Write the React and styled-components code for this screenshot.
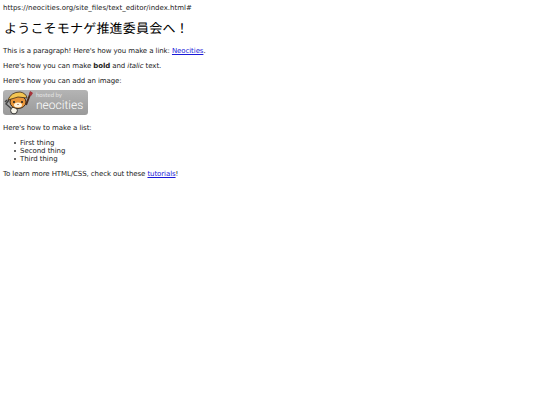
import styled, { createGlobalStyle } from 'styled-components';

const Global = createGlobalStyle`
html, body { margin: 0; background: #fff; }
body { font-family: "DejaVu Sans", sans-serif; font-size: 7px; line-height: 8px; color: #222; text-rendering: geometricPrecision; }
`;

const Page = styled.div`
padding: 4px 3px 3px;
display: flex;
flex-direction: column;
align-items: flex-start;
`;
const Url = styled.div`
margin-bottom: 7px;
`;
const Title = styled.h1`
margin: 0 0 10px 1px;
font-family: "Noto Sans CJK JP", sans-serif;
font-size: 13px;
line-height: 18px;
font-weight: 400;
letter-spacing: .2px;
color: #000;
`;
const Para = styled.p`
margin: 0 0 7px 0;
letter-spacing: -.09px;
`;
const Anchor = styled.a`
color: #1a1ad8;
text-decoration: underline;
`;
const Badge = styled.div`
width: 85px;
height: 25px;
margin: -2px 0 9px 0;
border-radius: 3px;
background: linear-gradient(#b4b4b4, #9a9a9a);
display: flex;
align-items: center;
gap: 1px;
`;
const BadgeWords = styled.div`
display: flex;
flex-direction: column;
color: #fff;
`;
const Hosted = styled.span`
font-family: "Lato", sans-serif;
font-size: 6px;
line-height: 6px;
color: #e4e4e4;
`;
const Brand = styled.span`
font-family: "Roboto", sans-serif;
font-weight: 300;
font-size: 12px;
line-height: 13px;
`;
const List = styled.ul`
margin: 0 0 7px 0;
padding: 0 0 0 11px;
list-style: none;
letter-spacing: -.05px;
`;
const Item = styled.li`
display: flex;
align-items: center;
gap: 4px;
&::before {
  content: "";
  width: 2px;
  height: 2px;
  border-radius: 50%;
  background: #333;
}
`;

function Mascot() {
  return <svg width="32" height="25" viewBox="0 0 32 25">
    <path d="M2 12 L4 10 M6 10 L3 14 L10 20" stroke="#444" strokeWidth="1.4" fill="none" />
    <circle cx="11" cy="20.5" r="3.4" fill="#f7f5ea" stroke="#333" />
    <path d="M28 2 L23 15" stroke="#4a2c20" strokeWidth="2" />
    <path d="M27 1 L30 3 L28 6 L26 5 Z" fill="#a8323a" />
    <ellipse cx="15" cy="12" rx="8" ry="6.5" fill="#e9963a" stroke="#3d2a18" />
    <path d="M5 10 Q8 2 17 2 Q23 3 24 8 L15 7 Z" fill="#f3c552" stroke="#3d2a18" strokeWidth=".8" />
    <ellipse cx="15" cy="15" rx="4" ry="2.5" fill="#fff4dd" />
    <circle cx="11" cy="12" r="1" fill="#1c1c1c" />
    <circle cx="19" cy="12" r="1" fill="#1c1c1c" />
    <path d="M14 14 L16 14 L15 15 Z" fill="#6a2a20" />
  </svg>;
}

export default function App() {
  return <>
    <Global />
    <Page>
      <Url>https://neocities.org/site_files/text_editor/index.html#</Url>
      <Title>ようこそモナゲ推進委員会へ！</Title>
      <Para>This is a paragraph! Here's how you make a link: <Anchor href="#">Neocities</Anchor>.</Para>
      <Para>Here's how you can make <b>bold</b> and <i>italic</i> text.</Para>
      <Para>Here's how you can add an image:</Para>
      <Badge>
        <Mascot />
        <BadgeWords>
          <Hosted>hosted by</Hosted>
          <Brand>neocities</Brand>
        </BadgeWords>
      </Badge>
      <Para>Here's how to make a list:</Para>
      <List>
        <Item>First thing</Item>
        <Item>Second thing</Item>
        <Item>Third thing</Item>
      </List>
      <Para>To learn more HTML/CSS, check out these <Anchor href="#">tutorials</Anchor>!</Para>
    </Page>
  </>;
}
